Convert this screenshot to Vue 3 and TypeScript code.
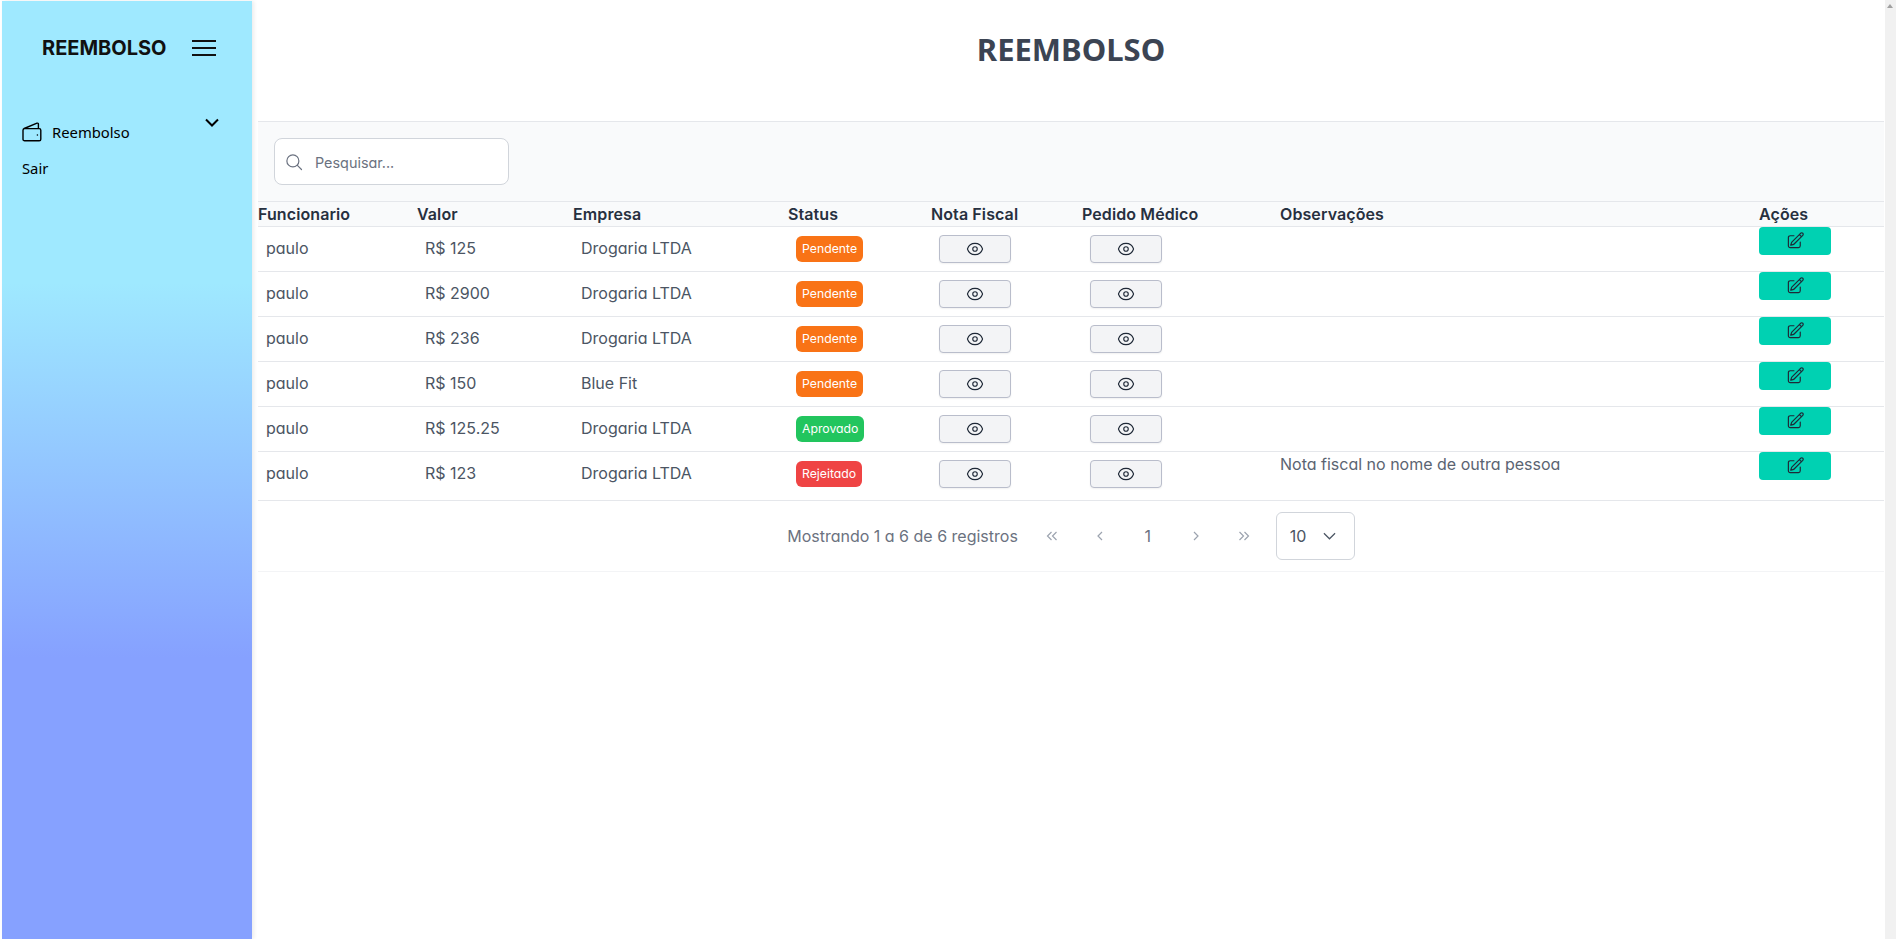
<script setup lang="ts">
interface Row {
  name: string
  value: string
  company: string
  status: 'Pendente' | 'Aprovado' | 'Rejeitado'
  notes: string
}

const rows: Row[] = [
  { name: 'paulo', value: 'R$ 125', company: 'Drogaria LTDA', status: 'Pendente', notes: '' },
  { name: 'paulo', value: 'R$ 2900', company: 'Drogaria LTDA', status: 'Pendente', notes: '' },
  { name: 'paulo', value: 'R$ 236', company: 'Drogaria LTDA', status: 'Pendente', notes: '' },
  { name: 'paulo', value: 'R$ 150', company: 'Blue Fit', status: 'Pendente', notes: '' },
  { name: 'paulo', value: 'R$ 125.25', company: 'Drogaria LTDA', status: 'Aprovado', notes: '' },
  { name: 'paulo', value: 'R$ 123', company: 'Drogaria LTDA', status: 'Rejeitado', notes: 'Nota fiscal no nome de outra pessoa' },
]
</script>

<template>
  <div class="shell">
    <aside class="sidebar">
      <div class="brand">
        <span>REEMBOLSO</span>
        <svg class="burger" viewBox="0 0 24 18" fill="none" stroke="#111" stroke-width="2">
          <path d="M0 2h24M0 9h24M0 16h24" />
        </svg>
      </div>
      <nav class="menu">
        <div class="menu-item">
          <svg class="wallet" viewBox="0 0 20 20" fill="none" stroke="#000" stroke-width="1.4" stroke-linejoin="round">
            <path d="M2.6 6.6h14.6a1.6 1.6 0 0 1 1.6 1.6v9a1.6 1.6 0 0 1-1.6 1.6H2.6A1.6 1.6 0 0 1 1 17.2V8.2C1 7.4 1.5 6.8 2.2 6.5L15 1.2c.7-.3 1.4.2 1.4.9v4.5" />
            <circle cx="15.4" cy="13" r="0.8" fill="#000" stroke="none" />
          </svg>
          <span>Reembolso</span>
          <svg class="chevron" viewBox="0 0 14 9" fill="none" stroke="#000" stroke-width="2">
            <path d="M1 1.5l6 6 6-6" />
          </svg>
        </div>
        <div class="menu-exit">Sair</div>
      </nav>
    </aside>

    <main class="content">
      <h1 class="title">REEMBOLSO</h1>

      <section class="toolbar">
        <label class="search">
          <svg viewBox="0 0 24 24" fill="none" stroke="#6b7280" stroke-width="1.6" stroke-linecap="round">
            <circle cx="10.5" cy="10.5" r="8" />
            <path d="M16.5 16.5L22 22" />
          </svg>
          <input type="text" placeholder="Pesquisar..." />
        </label>
      </section>

      <table class="grid">
        <colgroup>
          <col style="width: 159px" />
          <col style="width: 156px" />
          <col style="width: 215px" />
          <col style="width: 143px" />
          <col style="width: 151px" />
          <col style="width: 198px" />
          <col style="width: 479px" />
          <col style="width: 125px" />
        </colgroup>
        <thead>
          <tr>
            <th>Funcionario</th>
            <th>Valor</th>
            <th>Empresa</th>
            <th>Status</th>
            <th>Nota Fiscal</th>
            <th>Pedido Médico</th>
            <th>Observações</th>
            <th>Ações</th>
          </tr>
        </thead>
        <tbody>
          <tr v-for="(row, i) in rows" :key="i">
            <td class="text">{{ row.name }}</td>
            <td class="text">{{ row.value }}</td>
            <td class="text">{{ row.company }}</td>
            <td class="cell">
              <span class="badge" :class="row.status.toLowerCase()">{{ row.status }}</span>
            </td>
            <td class="cell">
              <button class="view" type="button">
                <svg viewBox="0 0 24 24" fill="none" stroke="#1f2937" stroke-width="1.5">
                  <path d="M2.036 12.322a1.012 1.012 0 010-.639C3.423 7.51 7.36 4.5 12 4.5c4.638 0 8.573 3.007 9.963 7.178.07.207.07.431 0 .639C20.577 16.49 16.64 19.5 12 19.5c-4.638 0-8.573-3.007-9.963-7.178z" />
                  <path d="M15 12a3 3 0 11-6 0 3 3 0 016 0z" />
                </svg>
              </button>
            </td>
            <td class="cell">
              <button class="view" type="button">
                <svg viewBox="0 0 24 24" fill="none" stroke="#1f2937" stroke-width="1.5">
                  <path d="M2.036 12.322a1.012 1.012 0 010-.639C3.423 7.51 7.36 4.5 12 4.5c4.638 0 8.573 3.007 9.963 7.178.07.207.07.431 0 .639C20.577 16.49 16.64 19.5 12 19.5c-4.638 0-8.573-3.007-9.963-7.178z" />
                  <path d="M15 12a3 3 0 11-6 0 3 3 0 016 0z" />
                </svg>
              </button>
            </td>
            <td class="notes">
              <p v-if="row.notes">{{ row.notes }}</p>
            </td>
            <td class="actions">
              <button class="edit" type="button">
                <svg viewBox="0 0 24 24" fill="none" stroke="#1f2937" stroke-width="1.5" stroke-linecap="round" stroke-linejoin="round">
                  <path d="M16.862 4.487l1.687-1.688a1.875 1.875 0 112.652 2.652L10.582 16.07a4.5 4.5 0 01-1.897 1.13L6 18l.8-2.685a4.5 4.5 0 011.13-1.897l8.932-8.931zm0 0L19.5 7.125M18 14v4.75A2.25 2.25 0 0115.75 21H5.25A2.25 2.25 0 013 18.75V8.25A2.25 2.25 0 015.25 6H10" />
                </svg>
              </button>
            </td>
          </tr>
        </tbody>
      </table>

      <footer class="pager">
        <span class="summary">Mostrando 1 a 6 de 6 registros</span>
        <div class="pages">
          <span class="page">
            <svg viewBox="0 0 12 12" fill="none" stroke="#9ca3af" stroke-width="1.2"><path d="M5.5 2L1.5 6l4 4M10.5 2l-4 4 4 4" /></svg>
          </span>
          <span class="page">
            <svg viewBox="0 0 12 12" fill="none" stroke="#9ca3af" stroke-width="1.2"><path d="M8 2L4 6l4 4" /></svg>
          </span>
          <span class="page current">1</span>
          <span class="page">
            <svg viewBox="0 0 12 12" fill="none" stroke="#9ca3af" stroke-width="1.2"><path d="M4 2l4 4-4 4" /></svg>
          </span>
          <span class="page">
            <svg viewBox="0 0 12 12" fill="none" stroke="#9ca3af" stroke-width="1.2"><path d="M1.5 2l4 4-4 4M6.5 2l4 4-4 4" /></svg>
          </span>
        </div>
        <div class="size">
          <span>10</span>
          <svg viewBox="0 0 14 8" fill="none" stroke="#4b5563" stroke-width="1.3">
            <path d="M1 1l6 6 6-6" />
          </svg>
        </div>
      </footer>
    </main>

    <div class="scrollbar"><span class="arrow"></span></div>
  </div>
</template>

<style>
body {
  margin: 0;
  background: #fff;
}
</style>

<style scoped>
.shell {
  display: flex;
  height: 939px;
  overflow: hidden;
  padding: 1px 0 0 2px;
  box-sizing: border-box;
  font-family: Inter, "Noto Sans", sans-serif;
  font-feature-settings: "cv11";
  color: #4b5563;
}

.sidebar {
  flex: 0 0 250px;
  background: linear-gradient(180deg, #9fe9ff 30%, #86a1ff 70%);
  box-shadow: 2px 0 4px rgba(0, 0, 0, 0.08);
  color: #000;
}
.brand {
  display: flex;
  align-items: center;
  height: 94px;
  padding: 0 0 0 40px;
  margin-bottom: 23px;
  font-size: 20px;
  font-weight: 700;
  color: #111;
  font-feature-settings: normal;
}
.burger {
  width: 24px;
  height: 18px;
  margin-left: 25px;
}
.menu {
  padding: 0 20px;
  font-family: "Noto Sans", sans-serif;
  font-size: 14.8px;
  font-feature-settings: normal;
}
.menu-item {
  display: flex;
  align-items: center;
  height: 28px;
  position: relative;
}
.wallet {
  width: 20px;
  height: 20px;
  margin-right: 10px;
}
.chevron {
  position: absolute;
  right: 13px;
  top: 0;
  width: 14px;
  height: 9px;
}
.menu-exit {
  margin-top: 12px;
  line-height: 20px;
}

.content {
  flex: 0 0 1626px;
  margin-left: 6px;
  min-width: 0;
}
.title {
  margin: 0;
  height: 120px;
  padding-top: 26px;
  box-sizing: border-box;
  text-align: center;
  font-family: "Noto Sans", sans-serif;
  font-size: 31px;
  line-height: 44px;
  font-weight: 700;
  color: #3b4453;
  font-feature-settings: normal;
}

.toolbar {
  height: 81px;
  box-sizing: border-box;
  padding: 16px;
  background: #f9fafb;
  border-top: 1px solid #e5e7eb;
  border-bottom: 1px solid #e5e7eb;
}
.search {
  display: flex;
  align-items: center;
  width: 235px;
  height: 47px;
  box-sizing: border-box;
  padding: 0 10px;
  background: #fff;
  border: 1px solid #d1d5db;
  border-radius: 8px;
}
.search svg {
  width: 18px;
  height: 18px;
  flex: none;
}
.search input {
  border: 0;
  outline: 0;
  padding: 1px 0 0;
  margin-left: 12px;
  width: 170px;
  background: transparent;
  font: inherit;
  font-size: 14.4px;
  font-feature-settings: "cv11";
}
.search input::placeholder {
  color: #6b7280;
  opacity: 1;
}

.grid {
  width: 1626px;
  table-layout: fixed;
  border-collapse: collapse;
}
.grid th {
  height: 24px;
  padding: 0;
  text-align: left;
  font-size: 16px;
  line-height: 20px;
  font-weight: 600;
  letter-spacing: 0.1px;
  color: #27303f;
  background: #f9fafb;
  border-bottom: 1px solid #e5e7eb;
  font-feature-settings: normal;
}
.grid td {
  padding: 8px;
  vertical-align: top;
  border-bottom: 1px solid #e5e7eb;
  font-size: 16px;
  line-height: 26px;
  box-sizing: border-box;
}
.grid td.notes,
.grid td.actions {
  padding: 0;
}
.notes p {
  margin: 0 0 24px;
  line-height: 24px;
  color: #5b6472;
}
.cell {
  height: 44px;
}

.badge {
  display: inline-flex;
  align-items: center;
  height: 26px;
  margin-top: 1px;
  padding: 0 6px;
  border-radius: 6px;
  font-size: 12.25px;
  line-height: 16px;
  color: #fff;
  vertical-align: top;
}
.pendente { background: #f97316; }
.aprovado { background: #22c55e; }
.rejeitado { background: #ef4444; }

.view,
.edit {
  display: flex;
  align-items: center;
  justify-content: center;
  width: 72px;
  height: 28px;
  padding: 0;
  border-radius: 4px;
  cursor: pointer;
}
.view {
  background: #f3f4f6;
  border: 1px solid #b9bdcb;
  box-shadow: 0 1px 2px rgba(0, 0, 0, 0.06);
}
.edit {
  background: #00d1b2;
  border: 0;
}
.view svg {
  width: 18px;
  height: 18px;
}
.edit svg {
  width: 19px;
  height: 19px;
  margin-bottom: 2px;
}

.pager {
  display: flex;
  align-items: center;
  justify-content: center;
  height: 70px;
  border-bottom: 1px solid #f3f4f6;
  font-size: 16px;
}
.summary {
  color: #6b7280;
}
.pages {
  display: flex;
  align-items: center;
  margin: 0 8px 0 10px;
}
.page {
  display: flex;
  align-items: center;
  justify-content: center;
  width: 48px;
}
.page svg {
  width: 12px;
  height: 12px;
}
.current {
  color: #6b7280;
}
.size {
  display: flex;
  align-items: center;
  justify-content: space-between;
  width: 79px;
  height: 48px;
  box-sizing: border-box;
  padding: 0 18px 0 13px;
  border: 1px solid #d1d5db;
  border-radius: 6px;
  font-size: 16px;
  color: #4b5563;
}
.size svg {
  width: 13px;
  height: 8px;
}

.scrollbar {
  position: absolute;
  top: 0;
  right: 0;
  bottom: 0;
  width: 11px;
  background: #f1f1f1;
}
.arrow {
  position: absolute;
  top: 4px;
  left: 2px;
  border-left: 3.5px solid transparent;
  border-right: 3.5px solid transparent;
  border-bottom: 4px solid #a0a0a0;
}
</style>
